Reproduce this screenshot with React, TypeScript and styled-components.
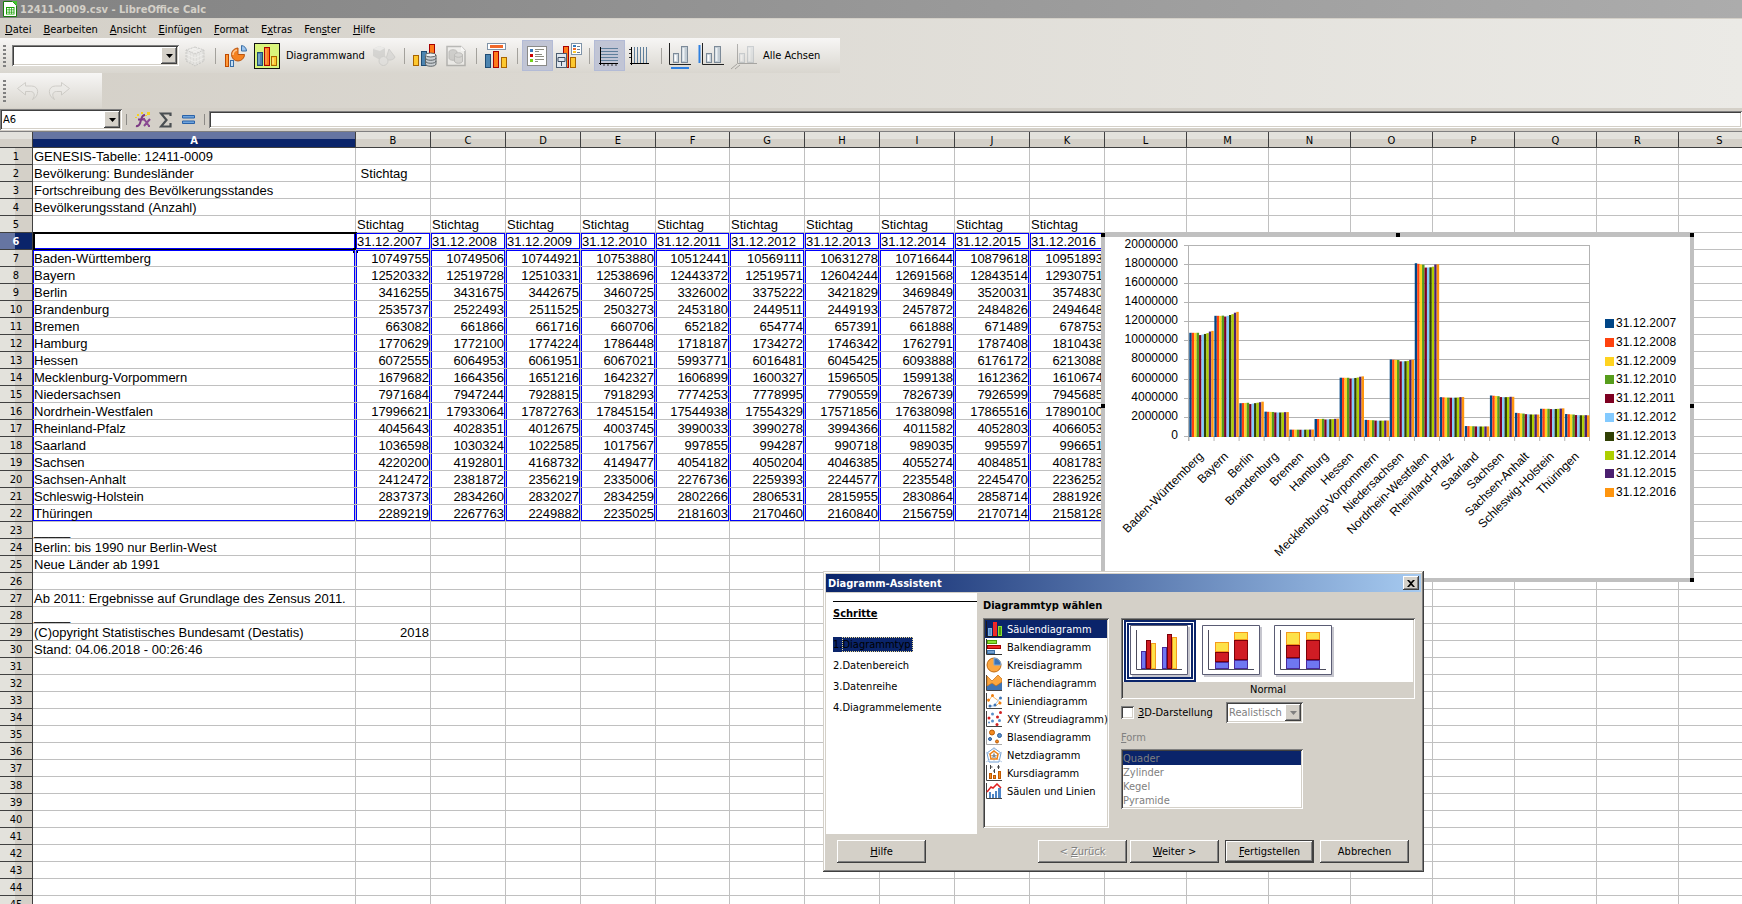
import React from 'react';
import styled, { createGlobalStyle, css } from 'styled-components';

const face = '#d4d0c8';
const navy = '#0a246a';
const uiFont = '"DejaVu Sans Condensed", "DejaVu Sans", sans-serif';
const docFont = '"Liberation Sans", Arial, sans-serif';

const raised = css`
  box-shadow: inset -1px -1px #404040, inset 1px 1px #fff, inset -2px -2px #808080;
`;
const sunken = css`
  box-shadow: inset 1px 1px #808080, inset -1px -1px #fff, inset 2px 2px #404040, inset -2px -2px ${face};
`;

const GlobalStyle = createGlobalStyle`
  * { box-sizing: border-box; }
  body { margin: 0; background: #fff; font-family: ${uiFont}; font-size: 11px; color: #000; }
  button, input, select { font: inherit; color: inherit; margin: 0; padding: 0; border: 0; border-radius: 0; background: none; outline: none; }
  svg { display: block; flex: none; }
  ul, ol, h2, h3 { margin: 0; padding: 0; list-style: none; font-size: inherit; }
`;

/* ---------- window frame ---------- */

const Window = styled.div`
  height: 100vh;
  display: flex;
  flex-direction: column;
  overflow: hidden;
`;

const TitleBar = styled.header`
  height: 18px;
  flex: none;
  display: flex;
  align-items: center;
  gap: 3px;
  padding-left: 3px;
  background: linear-gradient(90deg, #828282, #acacac);
  color: ${face};
  font-weight: bold;
`;

const Chrome = styled.div`
  flex: none;
  border-top: 1px solid ${face};
  background: linear-gradient(90deg, ${face}, #ebeae6);
`;

const MenuBar = styled.nav`
  height: 19px;
  display: flex;
`;

const MenuItem = styled.button`
  && { padding: 2px 7px 0 5px; }
`;

const Toolbar = styled.div<{ $h: number }>`
  width: fit-content;
  height: ${p => p.$h}px;
  display: flex;
  align-items: center;
  background: linear-gradient(#f7f6f5, #d9d6cf);
`;

const Grip = styled.span`
  width: 3px;
  height: 22px;
  margin: 0 6px 0 3px;
  flex: none;
  background: repeating-linear-gradient(#808080 0 2px, transparent 2px 4px);
`;

const ToolButton = styled.button<{ $on?: boolean }>`
  width: 31px;
  height: 31px;
  display: grid;
  place-items: center;
  && { background: ${p => (p.$on ? '#c1c5d5' : 'transparent')}; }
  box-shadow: ${p => (p.$on ? 'inset 0 0 0 1px #b3bbd6' : 'none')};
`;

const ToolLabel = styled.button<{ $w: number }>`
  width: ${p => p.$w}px;
  && { padding-left: 4px; }
  text-align: left;
  white-space: nowrap;
`;

const ToolSeparator = styled.span`
  width: 1px;
  height: 16px;
  margin: 0 4px 0 5px;
  background: #a3a19c;
`;

const Combo = styled.div<{ $w: number; $h: number; $dim?: boolean }>`
  position: relative;
  width: ${p => p.$w}px;
  height: ${p => p.$h}px;
  flex: none;
  display: flex;
  align-items: center;
  padding: 2px;
  background: #fff;
  color: ${p => (p.$dim ? '#808080' : '#000')};
  ${sunken}
  select, input {
    appearance: none;
    flex: 1;
    min-width: 0;
    align-self: stretch;
    padding-left: 1px;
    opacity: 1;
  }
`;

const ComboArrow = styled.span`
  width: 16px;
  align-self: stretch;
  flex: none;
  display: grid;
  place-items: center;
  background: ${face};
  pointer-events: none;
  ${raised}
`;

const FormulaBar = styled.div`
  height: 23px;
  flex: none;
  display: flex;
  align-items: center;
  background: ${face};
`;

const FormulaSeparator = styled.span`
  width: 1px;
  height: 11px;
  margin: 0 4px;
  background: #8c8a86;
`;

const FormulaButton = styled.button`
  width: 23px;
  height: 20px;
  display: grid;
  place-items: center;
`;

const FormulaGroup = styled.div`
  display: flex;
`;

const FormulaInput = styled.input`
  flex: 1;
  height: 17px;
  && {
    background: #fff;
    padding: 0 4px;
  }
  ${sunken}
`;

/* ---------- spreadsheet ---------- */

const Sheet = styled.main`
  position: relative;
  flex: 1;
  min-height: 0;
  overflow: hidden;
  border-top: 1px solid #808080;
`;

const Grid = styled.table`
  table-layout: fixed;
  width: 0;
  border-collapse: separate;
  border-spacing: 0;
`;

const ColHead = styled.th<{ $sel?: boolean }>`
  height: 16px;
  padding: 2px 0 0;
  line-height: 13px;
  font-weight: ${p => (p.$sel ? 'bold' : 'normal')};
  color: ${p => (p.$sel ? '#fff' : '#000')};
  border-right: 1px solid #404040;
  border-bottom: 1px solid #404040;
  background: ${p =>
    p.$sel
      ? `linear-gradient(#6675a2 7px, ${navy} 7px)`
      : `linear-gradient(#e3e2dc 7px, ${face} 7px)`};
`;

const RowHead = styled.th<{ $sel?: boolean }>`
  height: 17px;
  padding: 2px 0 0;
  line-height: 14px;
  font-weight: ${p => (p.$sel ? 'bold' : 'normal')};
  color: ${p => (p.$sel ? '#fff' : '#000')};
  border-right: 1px solid #404040;
  border-bottom: 1px solid #404040;
  background: ${p =>
    p.$sel
      ? `linear-gradient(90deg, #6675a2 15px, ${navy} 15px)`
      : `linear-gradient(90deg, #e3e2dc 15px, ${face} 15px)`};
`;

type Edge = 'none' | 'mid' | 'top' | 'bottom' | 'box';
const side = 'inset 1px 0 #00f, inset -1px 0 #00f';
const edges: Record<Edge, string> = {
  none: 'none',
  mid: side,
  top: `${side}, inset 0 1px #00f`,
  bottom: `${side}, inset 0 -1px #00f`,
  box: `${side}, inset 0 1px #00f, inset 0 -1px #00f`,
};

const Cell = styled.td<{ $edge: Edge; $num?: boolean }>`
  position: relative;
  height: 17px;
  padding: 2px 1px 0;
  line-height: 14px;
  font-family: ${docFont};
  font-size: 13px;
  white-space: pre;
  text-align: ${p => (p.$num ? 'right' : 'left')};
  border-right: 1px solid #c0c0c0;
  border-bottom: 1px solid #c0c0c0;
  box-shadow: ${p => edges[p.$edge]};
`;

const CellCursor = styled.span`
  position: absolute;
  inset: -1px -2px -2px 0;
  border: 2px solid #000;
  &::after {
    content: '';
    position: absolute;
    right: -3px;
    bottom: -4px;
    width: 5px;
    height: 5px;
    background: #000;
  }
`;

const states = [
  'Baden-Württemberg', 'Bayern', 'Berlin', 'Brandenburg', 'Bremen', 'Hamburg', 'Hessen',
  'Mecklenburg-Vorpommern', 'Niedersachsen', 'Nordrhein-Westfalen', 'Rheinland-Pfalz', 'Saarland',
  'Sachsen', 'Sachsen-Anhalt', 'Schleswig-Holstein', 'Thüringen',
];

const years = [2007, 2008, 2009, 2010, 2011, 2012, 2013, 2014, 2015, 2016];

const population = [
  [10749755, 10749506, 10744921, 10753880, 10512441, 10569111, 10631278, 10716644, 10879618, 10951893],
  [12520332, 12519728, 12510331, 12538696, 12443372, 12519571, 12604244, 12691568, 12843514, 12930751],
  [3416255, 3431675, 3442675, 3460725, 3326002, 3375222, 3421829, 3469849, 3520031, 3574830],
  [2535737, 2522493, 2511525, 2503273, 2453180, 2449511, 2449193, 2457872, 2484826, 2494648],
  [663082, 661866, 661716, 660706, 652182, 654774, 657391, 661888, 671489, 678753],
  [1770629, 1772100, 1774224, 1786448, 1718187, 1734272, 1746342, 1762791, 1787408, 1810438],
  [6072555, 6064953, 6061951, 6067021, 5993771, 6016481, 6045425, 6093888, 6176172, 6213088],
  [1679682, 1664356, 1651216, 1642327, 1606899, 1600327, 1596505, 1599138, 1612362, 1610674],
  [7971684, 7947244, 7928815, 7918293, 7774253, 7778995, 7790559, 7826739, 7926599, 7945685],
  [17996621, 17933064, 17872763, 17845154, 17544938, 17554329, 17571856, 17638098, 17865516, 17890100],
  [4045643, 4028351, 4012675, 4003745, 3990033, 3990278, 3994366, 4011582, 4052803, 4066053],
  [1036598, 1030324, 1022585, 1017567, 997855, 994287, 990718, 989035, 995597, 996651],
  [4220200, 4192801, 4168732, 4149477, 4054182, 4050204, 4046385, 4055274, 4084851, 4081783],
  [2412472, 2381872, 2356219, 2335006, 2276736, 2259393, 2244577, 2235548, 2245470, 2236252],
  [2837373, 2834260, 2832027, 2834259, 2802266, 2806531, 2815955, 2830864, 2858714, 2881926],
  [2289219, 2267763, 2249882, 2235025, 2181603, 2170460, 2160840, 2156759, 2170714, 2158128],
];

const notes: Record<number, string> = {
  1: 'GENESIS-Tabelle: 12411-0009',
  2: 'Bevölkerung: Bundesländer',
  3: 'Fortschreibung des Bevölkerungsstandes',
  4: 'Bevölkerungsstand (Anzahl)',
  23: '_____',
  24: 'Berlin: bis 1990 nur Berlin-West',
  25: 'Neue Länder ab 1991',
  27: 'Ab 2011: Ergebnisse auf Grundlage des Zensus 2011.',
  28: '_____',
  29: '(C)opyright Statistisches Bundesamt (Destatis)',
  30: 'Stand: 04.06.2018 - 00:26:46',
};

const columns = 'ABCDEFGHIJKLMNOPQRS'.split('');
const widths = columns.map((c, i) => (i === 0 ? 323 : c === 'F' ? 74 : i <= 10 ? 75 : 82));
const rows = Array.from({ length: 45 }, (_, i) => i + 1);

function cellText(row: number, col: number): string {
  const inData = row >= 7 && row <= 22;
  if (col === 0) return inData ? states[row - 7] : notes[row] ?? '';
  if (col > 10) return '';
  if (inData) return String(population[row - 7][col - 1]);
  if (row === 5) return 'Stichtag';
  if (row === 6) return `31.12.${years[col - 1]}`;
  if (col === 1 && row === 2) return ' Stichtag';
  if (col === 1 && row === 29) return '2018';
  return '';
}

function cellEdge(row: number, col: number): Edge {
  if (col > 10 || row < 6 || row > 22) return 'none';
  if (row === 6) return 'box';
  return row === 7 ? 'top' : row === 22 ? 'bottom' : 'mid';
}

function SheetGrid() {
  return (
    <Grid>
      <colgroup>
        <col style={{ width: 33 }} />
        {widths.map((w, i) => <col key={i} style={{ width: w }} />)}
      </colgroup>
      <thead>
        <tr>
          <ColHead aria-label="Alles auswählen" />
          {columns.map((c, i) => <ColHead key={c} scope="col" $sel={i === 0}>{c}</ColHead>)}
        </tr>
      </thead>
      <tbody>
        {rows.map(r => (
          <tr key={r}>
            <RowHead scope="row" $sel={r === 6}>{r}</RowHead>
            {columns.map((c, i) => (
              <Cell
                key={c}
                $edge={cellEdge(r, i)}
                $num={i > 0 && ((r >= 7 && r <= 22) || r === 29)}
              >
                {cellText(r, i)}
                {r === 6 && i === 0 && <CellCursor />}
              </Cell>
            ))}
          </tr>
        ))}
      </tbody>
    </Grid>
  );
}

/* ---------- embedded chart ---------- */

const ChartFrame = styled.figure`
  position: absolute;
  left: 1101px;
  top: 101px;
  margin: 0;
  border: 4px solid #c0c0c0;
  background: #fff;
  font-family: ${docFont};
`;

const Handle = styled.i<{ $x: string; $y: string }>`
  position: absolute;
  width: 4px;
  height: 4px;
  margin: -4px;
  background: #000;
  left: ${p => p.$x};
  top: ${p => p.$y};
`;

const seriesColors = [
  '#004586', '#ff420e', '#ffd320', '#579d1c', '#7e0021',
  '#83caff', '#314004', '#aecf00', '#4b1f6f', '#ff950e',
];

function PopulationChart() {
  const left = 84;
  const base = 200;
  const group = 400.8 / 16;
  const bar = 2.44;
  const scale = 191.5 / 20000000;
  const barScale = 192 / 20000000;
  const ticks = Array.from({ length: 11 }, (_, i) => i * 2000000);
  return (
    <ChartFrame>
      <svg width="585" height="341" viewBox="0 0 585 341" role="img" aria-label="Säulendiagramm Bevölkerung">
        <g stroke="#b3b3b3" strokeWidth="1">
          {ticks.map(t => {
            const y = Math.round(base - t * scale) - 0.5;
            return <line key={t} x1={left - 5} x2={left + 401} y1={y} y2={y} />;
          })}
          <path d="M83.5 8V204M484.5 8V204" />
          {states.map((s, i) => (
            <line key={s} x1={left + i * group} x2={left + i * group} y1={base} y2={base + 4} />
          ))}
        </g>
        {population.map((vals, i) => vals.map((v, j) => (
          <rect
            key={`${i}-${j}`}
            x={left + 0.3 + i * group + j * bar}
            y={base - 1 - v * barScale}
            width={bar}
            height={v * barScale + 1}
            fill={seriesColors[j]}
          />
        )))}
        <g fontSize="12" textAnchor="end">
          {ticks.map(t => <text key={t} x="73" y={Math.round(base - t * scale) + 2}>{t}</text>)}
        </g>
        <g fontSize="12" textAnchor="end">
          {states.map((s, i) => (
            <text key={s} transform={`translate(${left + 15 + i * group} 220) rotate(-45)`}>{s}</text>
          ))}
        </g>
        <g fontSize="12">
          {years.map((y, i) => (
            <g key={y}>
              <rect x="500" y={82 + Math.round(i * 18.8)} width="9" height="9" fill={seriesColors[i]} />
              <text x="511" y={90 + Math.round(i * 18.8)}>{`31.12.${y}`}</text>
            </g>
          ))}
        </g>
      </svg>
      <Handle $x="0px" $y="0px" />
      <Handle $x="calc(50% + 2px)" $y="0px" />
      <Handle $x="calc(100% + 4px)" $y="0px" />
      <Handle $x="0px" $y="50%" />
      <Handle $x="calc(100% + 4px)" $y="50%" />
      <Handle $x="calc(100% + 4px)" $y="calc(100% + 4px)" />
    </ChartFrame>
  );
}

/* ---------- wizard dialog ---------- */

const Dialog = styled.section`
  position: absolute;
  left: 823px;
  top: 439px;
  width: 601px;
  padding: 3px;
  background: ${face};
  box-shadow: inset -1px -1px #404040, inset 1px 1px ${face}, inset -2px -2px #808080, inset 2px 2px #fff;
`;

const DialogTitle = styled.div`
  height: 18px;
  display: flex;
  align-items: center;
  justify-content: space-between;
  padding: 0 2px;
  background: linear-gradient(90deg, ${navy}, #a6caf0);
  color: #fff;
  font-weight: bold;
`;

const CloseButton = styled.button`
  width: 16px;
  height: 14px;
  display: grid;
  place-items: center;
  && { background: ${face}; }
  ${raised}
`;

const DialogBody = styled.div`
  height: 241px;
  margin-top: 1px;
  display: flex;
`;

const Steps = styled.div`
  width: 151px;
  background: #fff;
  padding: 8px 0 0 7px;
`;

const StepsTitle = styled.h3`
  border-top: 1px solid #000;
  padding: 4px 0 15px;
  line-height: 16px;
  text-decoration: underline;
`;

const StepButton = styled.button<{ $on?: boolean }>`
  display: block;
  height: 15px;
  && { margin-bottom: 6px; }
  line-height: 15px;
  white-space: nowrap;
  && { background: ${p => (p.$on ? navy : 'none')}; }
  span {
    display: inline-block;
    height: 15px;
    padding-right: 2px;
    outline: ${p => (p.$on ? '1px dotted #e8d890' : 'none')};
    outline-offset: -1px;
  }
`;

const TypeColumn = styled.div`
  width: 126px;
  margin-left: 6px;
  padding-top: 6px;
`;

const TypeTitle = styled.h3`
  line-height: 14px;
  margin-bottom: 5px;
  white-space: nowrap;
`;

const TypeList = styled.ul`
  height: 210px;
  && { padding: 2px; }
  background: #fff;
  ${sunken}
`;

const TypeOption = styled.li<{ $on?: boolean }>`
  height: 18px;
  display: flex;
  align-items: center;
  gap: 5px;
  padding-left: 1px;
  white-space: nowrap;
  background: ${p => (p.$on ? navy : 'transparent')};
  color: ${p => (p.$on ? '#fff' : '#000')};
`;

const OptionsColumn = styled.div`
  flex: 1;
  margin-left: 12px;
  padding: 25px 6px 0 0;
`;

const SubtypeBox = styled.div`
  height: 81px;
  padding: 2px;
  ${sunken}
`;

const SubtypeRow = styled.div`
  display: flex;
  height: 62px;
  padding-left: 1px;
  background: #fff;
`;

const SubtypeButton = styled.button<{ $on?: boolean }>`
  width: 72px;
  height: 62px;
  display: grid;
  place-items: center;
  && { border: ${p => (p.$on ? `5px double ${navy}` : '5px solid transparent')}; }
`;

const SubtypeName = styled.div`
  line-height: 15px;
  text-align: center;
`;

const ThreeDRow = styled.div`
  display: flex;
  align-items: center;
  margin-top: 3px;
`;

const CheckLabel = styled.label`
  width: 105px;
  display: flex;
  align-items: center;
  gap: 4px;
  white-space: nowrap;
  input {
    appearance: none;
    width: 13px;
    height: 13px;
    background: #fff;
    ${sunken}
  }
`;

const FormTitle = styled.h3`
  && { margin: 8px 0 4px; }
  line-height: 14px;
  font-weight: normal;
  color: #808080;
`;

const FormList = styled.ul`
  width: 182px;
  && { padding: 2px; }
  background: #fff;
  color: #808080;
  ${sunken}
`;

const FormOption = styled.li<{ $on?: boolean }>`
  height: 14px;
  line-height: 16px;
  background: ${p => (p.$on ? navy : 'transparent')};
`;

const DialogFooter = styled.footer`
  display: flex;
  padding: 6px 12px 6px 11px;
`;

const DialogButton = styled.button<{ $default?: boolean; $gap: number }>`
  width: 89px;
  height: 23px;
  && { margin-left: ${p => p.$gap}px; }
  ${raised}
  ${p => p.$default && css`
    box-shadow: inset 0 0 0 1px #404040, inset -2px -2px #404040, inset 2px 2px #fff, inset -3px -3px #808080;
  `}
  &:disabled {
    color: #808080;
    text-shadow: 1px 1px #fff;
  }
  &&:first-child {
    margin: 0 auto 0 0;
  }
`;

/* ---------- drawings ---------- */

const Arrow = ({ dim }: { dim?: boolean }) => (
  <svg width="7" height="4" viewBox="0 0 7 4"><path d="M0 0h7L3.500 4z" fill={dim ? '#808080' : '#000'} /></svg>
);

const Icon = ({ s = 24, x = 0, children, faded }: { s?: number; x?: number; children: React.ReactNode; faded?: boolean }) => (
  <svg width={s} height={s} viewBox={`${x} 0 ${s} ${s}`} fill="none" opacity={faded ? 0.55 : 1} aria-hidden="true">{children}</svg>
);

const AppIcon = () => (
  <svg width="14" height="16" viewBox="0 0 14 16">
    <path d="M.5.5h9l4 4v11H.5z" fill="#fff" stroke="#18780c" />
    <path d="M9 0l5 5V0z" fill="#43c330" />
    <path d="M3 6h8.500v7.500H3z" fill="#18a303" />
    <path d="M4 7h1.800v1.500H4zM6.500 7h1.800v1.500H6.500zM9 7h1.600v1.500H9zM4 9.200h1.800v1.500H4zM6.500 9.200h1.800v1.500H6.500zM9 9.200h1.600v1.500H9zM4 11.400h1.800v1.400H4zM6.500 11.400h1.800v1.400H6.500zM9 11.400h1.600v1.400H9z" fill="#fff" />
  </svg>
);

const Bars3 = ({ x = 0, y = 0 }) => (
  <g transform={`translate(${x} ${y})`}>
    <rect x=".5" y="5.500" width="5" height="13" fill="#4c84b0" stroke="#1f4c74" />
    <path d="M2 7v10" stroke="#9cc4e0" />
    <rect x="7.500" y=".5" width="5" height="18" fill="#ff7a1a" stroke="#a80000" />
    <path d="M9 2v15" stroke="#ffb070" />
    <rect x="14.500" y="9.500" width="5" height="9" fill="#fdc82f" stroke="#a86400" />
    <path d="M16 11v6" stroke="#fff0a0" />
  </g>
);

const CubeIcon = () => (
  <Icon faded>
    <path d="M12 3l9 3v11l-9 5-9-5V6z" fill="#d6d6d4" />
    <path d="M3 6l9 4 9-4-9-3z" fill="#e6e6e4" />
    <path d="M3 10l9 4 9-4M3 14l9 4 9-4M12 10v12M6 7v12M9 9v12M15 9v12M18 7v12M6 5l9 4M9 4l9 4M9 9l9-4M6 7l9-4" stroke="#f6f6f4" />
    <path d="M12 3l9 3v11l-9 5-9-5V6zM3 6l9 4 9-4" stroke="#b0b0ae" strokeDasharray="2 1" />
  </Icon>
);

const ChartTypeIcon = () => (
  <Icon>
    <path d="M14 4a6.500 6.500 0 1 0 6.500 6.500H14z" fill="#f58220" stroke="#b85410" />
    <path d="M13 6a5 5 0 0 0-4 5" stroke="#ffc48a" strokeWidth="1.500" />
    <path d="M17.500 1.500a6 6 0 0 1 5 5.500h-5z" fill="#9cc4ee" stroke="#3a6ea5" />
    <rect x="1.500" y="10.500" width="3" height="12" fill="#ff9a3a" stroke="#c04a00" />
    <rect x="6.500" y="16.500" width="3" height="6" fill="#c8e0f4" stroke="#3a6ea5" />
  </Icon>
);

const WallIcon = () => (
  <Icon s={26}>
    <rect x=".5" y=".5" width="25" height="25" fill="#d9f57c" stroke="#111" />
    <Bars3 x={3} y={4} />
  </Icon>
);

const ShapesIcon = () => (
  <Icon faded>
    <path d="M1 5l6-3 6 2v8l-5 4-7-4z" fill="#c4c4c2" />
    <path d="M1 5l7 2 5-3-6-2z" fill="#e8e8e6" />
    <path d="M17 5l6 8c-1 3-6 4-9 2z" fill="#d0d0ce" stroke="#b8b8b6" />
    <circle cx="11.500" cy="17" r="4.500" fill="#dededc" stroke="#bcbcba" />
  </Icon>
);

const DataTableIcon = () => (
  <Icon>
    <rect x=".5" y="11.500" width="5" height="10" fill="#fdc82f" stroke="#a86400" />
    <rect x="8.500" y="7.500" width="5" height="14" fill="#4c84b0" stroke="#1f4c74" />
    <rect x="16.500" y=".5" width="5" height="12" fill="#ff7a1a" stroke="#a80000" />
    <path d="M12.500 11v9c0 3 10.500 3 10.500 0v-9z" fill="#c9ced2" stroke="#5c6468" />
    <ellipse cx="17.700" cy="11" rx="5.200" ry="2" fill="#eef0f2" stroke="#5c6468" />
    <path d="M12.500 14c0 3 10.500 3 10.500 0M12.500 17c0 3 10.500 3 10.500 0" stroke="#5c6468" />
  </Icon>
);

const DataRangeIcon = () => (
  <Icon faded>
    <path d="M3 2.500h14l4 4v15H3z" fill="#f0f0ee" stroke="#8c8c8a" strokeWidth="1.500" />
    <path d="M17 2l4.500 5H17z" fill="#fff" />
    <path d="M5 8c0-3 8-3 8 0v6c0 3-8 3-8 0z" fill="#b8b8b6" stroke="#9a9a98" />
    <path d="M10.500 11c0-3 8-3 8 0v6c0 3-8 3-8 0z" fill="#c8c8c6" stroke="#9a9a98" />
    <path d="M10.500 11c0 3 8 3 8 0" stroke="#9a9a98" />
  </Icon>
);

const TitlesIcon = () => (
  <svg width="23" height="26" viewBox="0 0 23 26" fill="none">
    <rect x="2.500" y=".5" width="18" height="6" fill="#fff" stroke="#7f93a8" />
    <rect x="5" y="2" width="13" height="3" fill="#f0682a" />
    <rect x=".5" y="11.500" width="5" height="13" fill="#4c84b0" stroke="#1f4c74" />
    <rect x="8.500" y="8.500" width="5" height="16" fill="#ff7a1a" stroke="#a80000" />
    <rect x="16.500" y="14.500" width="5" height="10" fill="#fdc82f" stroke="#a86400" />
  </svg>
);

const LegendIcon = () => (
  <Icon x={1}>
    <rect x="2.500" y="2.500" width="19" height="19" fill="#fff" stroke="#8a8a88" />
    <path d="M5 5h3v3H5z" fill="#3a7ab8" />
    <path d="M5 10h3v3H5z" fill="#cc0000" />
    <path d="M5 15h3v3H5z" fill="#73d216" />
    <path d="M10 5.500h9M10 7.500h4M10 10.500h7M10 12.500h9M10 15.500h9M10 17.500h3" stroke="#8c8c80" />
  </Icon>
);

const LegendFormatIcon = () => (
  <svg width="26" height="26" viewBox="0 0 26 26" fill="none">
    <rect x="7.500" y="3.500" width="5" height="21" fill="#ff7a1a" stroke="#a80000" />
    <rect x=".5" y="10.500" width="10" height="14" fill="#dfe6ee" stroke="#4a5c70" />
    <path d="M2 14.500h7v4H2zM5.500 18v5" stroke="#3c4c60" />
    <rect x="14.500" y="14.500" width="5" height="10" fill="#fdc82f" stroke="#a86400" />
    <rect x="15.500" y=".5" width="10" height="11" fill="#fff" stroke="#7f93a8" />
    <path d="M17 2h3v2h-3z" fill="#3a7ab8" /><path d="M17 5h3v2h-3z" fill="#f0682a" /><path d="M17 8h3v2h-3z" fill="#fdc82f" />
    <path d="M21 3.500h3M21 6.500h3M21 9.500h3" stroke="#6c7c90" />
  </svg>
);

const GridHIcon = () => (
  <Icon x={2}>
    <path d="M5 4.500h17M5 7.500h17M5 10.500h17M5 13.500h17M5 16.500h17" stroke="#5f7f9c" />
    <path d="M4.500 3v18M3 19.500h19" stroke="#000" />
    <path d="M8 20v2M12 20v2M16 20v2M20 20v2" stroke="#333" />
  </Icon>
);

const GridVIcon = () => (
  <Icon x={2}>
    <path d="M7.500 3v16M10.500 3v16M13.500 3v16M16.500 3v16M19.500 3v16" stroke="#5f7f9c" />
    <path d="M4.500 3v18M3 19.500h19" stroke="#000" />
    <path d="M2 5.500h2M2 9.500h2M2 13.500h2" stroke="#333" />
  </Icon>
);

const axisShift = { x: 4, y: 2, z: 0 };

const AxisIcon = ({ kind }: { kind: 'x' | 'y' | 'z' }) => (
  <svg width="26" height="26" viewBox={`${axisShift[kind]} 0 26 26`} fill="none" overflow="visible" opacity={kind === 'z' ? 0.3 : 1}>
    <rect x="8.500" y="10.500" width="5" height="9" fill="#c9d2da" stroke="#7c8a98" />
    <path d="M10.500 12v6" stroke="#fff" strokeWidth="2" />
    <rect x="16.500" y="3.500" width="6" height="16" fill="#c2ccd4" stroke="#7c8a98" />
    <path d="M18.500 5v13" stroke="#eef2f5" strokeWidth="2" />
    <path d={kind === 'z' ? 'M6.500 1v19.500H26' : 'M4.500 0v21.500H26'} stroke="#222" />
    {kind === 'x' && <path d="M6 25h18" stroke="#2f80e0" strokeWidth="2" />}
    {kind === 'y' && <path d="M1.500 2v18" stroke="#2f80e0" strokeWidth="2" />}
    {kind === 'z' && <path d="M6 21l-6 5M9 22l-5 4" stroke="#222" />}
  </svg>
);

const UndoIcon = ({ flip }: { flip?: boolean }) => (
  <Icon faded>
    <path
      transform={flip ? 'translate(24 0) scale(-1 1)' : undefined}
      d="M1.500 9.500l8-6v3.500h6c8 0 8 10 1 13.500 3-4 2-8-2-8h-5v3.500z"
      fill="#ecebe8" stroke="#b8b6b0" strokeLinejoin="round"
    />
  </Icon>
);

const FxIcon = () => (
  <svg width="18" height="17" viewBox="0 0 18 17" fill="none">
    <path d="M2 15c4 1 4-3 5-6s1-5 4-5M4 8.500h7" stroke="#7c3a84" strokeWidth="2" />
    <path d="M10 8l5 7M16 8l-6 7M9 8h2M14 15h2" stroke="#8a4a92" strokeWidth="2" />
    <path d="M3 3h2v2H3zM7 1h2v2H7zM13 1h3v3h-3zM1 6h2v1H1zM11 4h2v1h-2z" fill="#f5d020" />
  </svg>
);

const SumIcon = () => (
  <svg width="13" height="16" viewBox="0 0 13 16" fill="none">
    <path d="M11.500 4V1.500H2L7.500 8 2 14.500h9.500V11" stroke="#4a4f52" strokeWidth="2.200" />
  </svg>
);

const EqualsIcon = () => (
  <svg width="13" height="9" viewBox="0 0 13 9">
    <path d="M.5.5h12v2.500H.5zM.5 6h12v2.500H.5z" fill="#6fa4dc" stroke="#2a62a8" />
  </svg>
);

const axes = <path d="M.5 0v15.500H16" stroke="#444" />;

const typeIcons: Record<string, React.ReactNode> = {
  'Säulendiagramm': <><path d="M.5 0v15.500H16" stroke="#1a1a1a" /><rect x="2.500" y="7.500" width="3" height="7" fill="#5a8fc8" stroke="#7fb0e0" /><rect x="7.500" y="1.500" width="3" height="13" fill="#e03030" stroke="#ff2020" /><rect x="12.500" y="5.500" width="3" height="9" fill="#4f9a10" stroke="#8ae234" /></>,
  'Balkendiagramm': <><path d="M.5 0v15.500H16" stroke="#333" /><rect x="1.500" y="1.500" width="9" height="3" fill="#8ae234" stroke="#4e9a06" /><rect x="1.500" y="6.500" width="13" height="3" fill="#ef2929" stroke="#a40000" /><rect x="1.500" y="11.500" width="7" height="3" fill="#729fcf" stroke="#3a6ea5" /></>,
  'Kreisdiagramm': <><circle cx="8" cy="8" r="7" fill="#fba640" stroke="#c06a10" /><path d="M8 1a7 7 0 0 1 7 7H8z" fill="#3f74b4" stroke="#7aa8dc" /></>,
  'Flächendiagramm': <>{axes}<path d="M1 11l5-3 4 2 6-4v9H1z" fill="#3f74b4" /><path d="M1 1l5 5 6-6 4 4v3l-6 4-4-3-5 3z" fill="#fba640" stroke="#c06a10" strokeWidth=".7" /></>,
  'Liniendiagramm': <>{axes}<path d="M2 9l4-6 8 6-4 4" stroke="#fbb860" /><path d="M3 13h5l6-8" stroke="#a8c8ec" /><g fill="#f08010"><circle cx="2.500" cy="7" r="1.500" /><circle cx="6.500" cy="2.500" r="1.500" /><circle cx="14" cy="10" r="1.500" /></g><g fill="#3f74b4"><circle cx="4" cy="13" r="1.500" /><circle cx="9" cy="12" r="1.500" /><circle cx="14.500" cy="5" r="1.500" /></g></>,
  'XY (Streudiagramm)': <>{axes}<g fill="#d02020"><circle cx="3" cy="7" r="1.500" /><circle cx="14.500" cy="1.500" r="1.500" /><circle cx="11.500" cy="6" r="1.500" /><circle cx="11" cy="13.500" r="1.500" /></g><g fill="#5a8fc8"><circle cx="6.500" cy="3" r="1.500" /><circle cx="6.500" cy="10" r="1.500" /><circle cx="13.500" cy="9.500" r="1.500" /><circle cx="3" cy="11.500" r="1" /></g></>,
  'Blasendiagramm': <><path d="M.5 0v15.500H16" stroke="#aaa" /><g fill="#f58a20" stroke="#b85c08"><circle cx="6" cy="3.500" r="2.500" /><circle cx="11" cy="12.500" r="1.500" /></g><g fill="#5a8fc8" stroke="#2a5c9c"><circle cx="13.500" cy="6.500" r="2" /><circle cx="4" cy="10" r="1.500" /></g></>,
  'Netzdiagramm': <><path d="M8 1l7 5-2 9H3L1 6z" stroke="#6f9fd4" /><path d="M0 5l16 10M16 5L0 15M8 0v15" stroke="#b8cce4" /><path d="M8 4l4 3-1 5H5L4 7z" stroke="#f08010" strokeWidth="1.500" /><path d="M8 6l1 2h2l-2 1 1 2-2-1-2 1 1-2-2-1h2z" fill="#888" /></>,
  'Kursdiagramm': <>{axes}<path d="M4.500 0v4M4.500 2h2M8.500 4v4M7 6h2M12.500 0v4M11 2h3" stroke="#444" /><rect x="3.500" y="8.500" width="2" height="5" fill="#f58a20" stroke="#c05a00" /><rect x="7.500" y="10.500" width="2" height="3" fill="#f58a20" stroke="#c05a00" /><rect x="12.500" y="6.500" width="2" height="7" fill="#f58a20" stroke="#c05a00" /></>,
  'Säulen und Linien': <>{axes}<path d="M3 9h2v6H3zM6 11h2v4H6zM9 8h2v7H9zM12 5h3v10h-3z" fill="#4f86c6" /><path d="M1 9l4-5 2 1 4-4 4 4" stroke="#e02020" strokeWidth="1.500" /></>,
};

const typeNames = Object.keys(typeIcons);

type Block = [number, number, number, number, 'b' | 'r' | 'y'];
const blockFill = { b: '#6f77f2', r: '#d01c24', y: '#fde24a' };
const blockLine = { b: '#4a2a9c', r: '#7c0008', y: '#f59a1c' };

const subtypes: { name: string; blocks: Block[] }[] = [
  { name: 'Normal', blocks: [[11, 26, 5, 18, 'b'], [16, 15, 5, 29, 'r'], [21, 18, 5, 26, 'y'], [32, 22, 5, 22, 'b'], [37, 9, 5, 35, 'r'], [42, 12, 5, 32, 'y']] },
  { name: 'Gestapelt', blocks: [[13, 17, 14, 10, 'y'], [13, 27, 14, 10, 'r'], [13, 37, 14, 7, 'b'], [32, 7, 14, 8, 'y'], [32, 15, 14, 20, 'r'], [32, 35, 14, 9, 'b']] },
  { name: 'Prozentual gestapelt', blocks: [[12, 7, 14, 13, 'y'], [12, 20, 14, 13, 'r'], [12, 33, 14, 11, 'b'], [32, 7, 14, 8, 'y'], [32, 15, 14, 20, 'r'], [32, 35, 14, 9, 'b']] },
];

const SubtypeIcon = ({ blocks }: { blocks: Block[] }) => (
  <svg width="60" height="52" viewBox="0 0 60 52" fill="none">
    <path d="M2 2h58v50H2z" fill="#c6c6ce" />
    <path d="M.5.5h57v49H.5z" fill="#fff" stroke="#5a5c74" />
    {blocks.map(([x, y, w, h, c], i) => (
      <rect key={i} x={x + 0.5} y={y + 0.5} width={w - 1} height={h - 1} fill={blockFill[c]} stroke={blockLine[c]} />
    ))}
    <path d="M6.500 5v39.500H52" stroke="#4c4c5c" />
  </svg>
);

/* ---------- assembled parts ---------- */

const steps = ['Diagrammtyp', 'Datenbereich', 'Datenreihe', 'Diagrammelemente'];

function ChartWizard() {
  return (
    <Dialog role="dialog" aria-label="Diagramm-Assistent">
      <DialogTitle>
        Diagramm-Assistent
        <CloseButton aria-label="Schließen">
          <svg width="8" height="7" viewBox="0 0 8 7"><path d="M0 0h2l2 2 2-2h2L5 3.500 8 7H6L4 5 2 7H0l3-3.500z" /></svg>
        </CloseButton>
      </DialogTitle>
      <DialogBody>
        <Steps>
          <StepsTitle>Schritte</StepsTitle>
          <ol>
            {steps.map((s, i) => (
              <li key={s}>
                <StepButton $on={i === 0}>{i + 1}.<span>{s}</span></StepButton>
              </li>
            ))}
          </ol>
        </Steps>
        <TypeColumn>
          <TypeTitle id="type-title">Diagrammtyp wählen</TypeTitle>
          <TypeList role="listbox" aria-labelledby="type-title">
            {typeNames.map((name, i) => (
              <TypeOption key={name} role="option" aria-selected={i === 0} $on={i === 0}>
                <Icon s={16}>{typeIcons[name]}</Icon>
                {name}
              </TypeOption>
            ))}
          </TypeList>
        </TypeColumn>
        <OptionsColumn>
          <SubtypeBox>
            <SubtypeRow>
              {subtypes.map((t, i) => (
                <SubtypeButton key={t.name} aria-label={t.name} $on={i === 0}>
                  <SubtypeIcon blocks={t.blocks} />
                </SubtypeButton>
              ))}
            </SubtypeRow>
            <SubtypeName>Normal</SubtypeName>
          </SubtypeBox>
          <ThreeDRow>
            <CheckLabel>
              <input type="checkbox" />
              <span><u>3</u>D-Darstellung</span>
            </CheckLabel>
            <Combo $w={77} $h={21} $dim>
              <select disabled aria-label="Schema" defaultValue="Realistisch"><option>Realistisch</option></select>
              <ComboArrow><Arrow dim /></ComboArrow>
            </Combo>
          </ThreeDRow>
          <FormTitle id="form-title"><u>F</u>orm</FormTitle>
          <FormList role="listbox" aria-labelledby="form-title" aria-disabled="true">
            {['Quader', 'Zylinder', 'Kegel', 'Pyramide'].map((f, i) => (
              <FormOption key={f} role="option" aria-selected={i === 0} $on={i === 0}>{f}</FormOption>
            ))}
          </FormList>
        </OptionsColumn>
      </DialogBody>
      <DialogFooter>
        <DialogButton $gap={0}><u>H</u>ilfe</DialogButton>
        <DialogButton $gap={0} disabled>&lt; <u>Z</u>urück</DialogButton>
        <DialogButton $gap={3}><u>W</u>eiter &gt;</DialogButton>
        <DialogButton $gap={6} $default><u>F</u>ertigstellen</DialogButton>
        <DialogButton $gap={6}>Abbrechen</DialogButton>
      </DialogFooter>
    </Dialog>
  );
}

const menus: [string, string, string][] = [
  ['', 'D', 'atei'], ['', 'B', 'earbeiten'], ['', 'A', 'nsicht'], ['', 'E', 'infügen'],
  ['', 'F', 'ormat'], ['E', 'x', 'tras'], ['Fen', 's', 'ter'], ['', 'H', 'ilfe'],
];

export default function App() {
  return (
    <>
      <GlobalStyle />
      <Window>
        <TitleBar><AppIcon />12411-0009.csv - LibreOffice Calc</TitleBar>
        <Chrome>
          <MenuBar>
            {menus.map(([a, b, c]) => <MenuItem key={a + b + c}>{a}<u>{b}</u>{c}</MenuItem>)}
          </MenuBar>
          <Toolbar $h={35}>
            <Grip />
            <Combo $w={167} $h={21}>
              <select aria-label="Diagrammelement auswählen"><option> </option></select>
              <ComboArrow><Arrow /></ComboArrow>
            </Combo>
            <ToolButton aria-label="Auswahl formatieren" disabled><CubeIcon /></ToolButton>
            <ToolSeparator />
            <ToolButton aria-label="Diagrammtyp"><ChartTypeIcon /></ToolButton>
            <ToolButton aria-label="Wand"><WallIcon /></ToolButton>
            <ToolLabel $w={86}>Diagrammwand</ToolLabel>
            <ToolButton aria-label="3D-Ansicht" disabled><ShapesIcon /></ToolButton>
            <ToolSeparator />
            <ToolButton aria-label="Datentabelle"><DataTableIcon /></ToolButton>
            <ToolButton aria-label="Datenbereiche" disabled><DataRangeIcon /></ToolButton>
            <ToolSeparator />
            <ToolButton aria-label="Titel"><TitlesIcon /></ToolButton>
            <ToolSeparator />
            <ToolButton aria-label="Legende ein/aus" $on><LegendIcon /></ToolButton>
            <ToolButton aria-label="Legende"><LegendFormatIcon /></ToolButton>
            <ToolSeparator />
            <ToolButton aria-label="Horizontale Gitter" $on><GridHIcon /></ToolButton>
            <ToolButton aria-label="Vertikale Gitter"><GridVIcon /></ToolButton>
            <ToolSeparator />
            <ToolButton aria-label="X-Achse"><AxisIcon kind="x" /></ToolButton>
            <ToolButton aria-label="Y-Achse"><AxisIcon kind="y" /></ToolButton>
            <ToolButton aria-label="Z-Achse" disabled><AxisIcon kind="z" /></ToolButton>
            <ToolLabel $w={81}>Alle Achsen</ToolLabel>
          </Toolbar>
          <Toolbar $h={35}>
            <Grip />
            <ToolButton aria-label="Rückgängig" disabled><UndoIcon /></ToolButton>
            <ToolButton aria-label="Wiederherstellen" disabled><UndoIcon flip /></ToolButton>
            <ToolLabel as="span" $w={28} />
          </Toolbar>
        </Chrome>
        <FormulaBar>
          <Combo $w={122} $h={21}>
            <input aria-label="Namenfeld" defaultValue="A6" />
            <ComboArrow><Arrow /></ComboArrow>
          </Combo>
          <FormulaSeparator />
          <FormulaGroup>
            <FormulaButton aria-label="Funktions-Assistent"><FxIcon /></FormulaButton>
            <FormulaButton aria-label="Summe"><SumIcon /></FormulaButton>
            <FormulaButton aria-label="Funktion"><EqualsIcon /></FormulaButton>
          </FormulaGroup>
          <FormulaSeparator />
          <FormulaInput aria-label="Eingabezeile" />
        </FormulaBar>
        <Sheet>
          <SheetGrid />
          <PopulationChart />
          <ChartWizard />
        </Sheet>
      </Window>
    </>
  );
}
